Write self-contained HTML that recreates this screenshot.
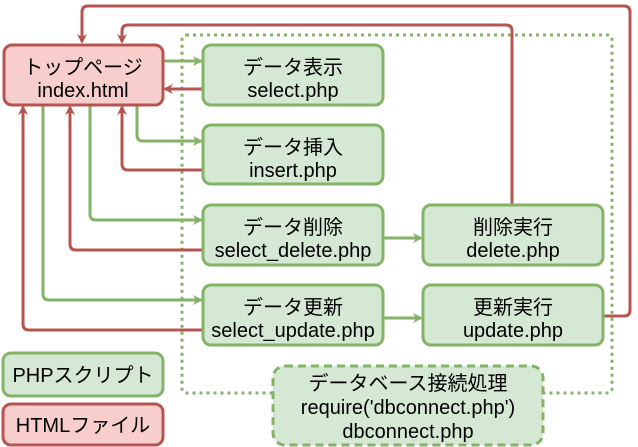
<!DOCTYPE html>
<html><head><meta charset="utf-8"><style>
html,body{margin:0;padding:0;background:#fff;}
svg{display:block}
text{font-family:"Liberation Sans","Noto Sans CJK JP",sans-serif;font-size:20px;fill:#000;text-anchor:middle}
</style></head><body>
<svg width="638" height="447" viewBox="0 0 638 447" xmlns="http://www.w3.org/2000/svg">
<defs>
<marker id="ag" markerWidth="10" markerHeight="10" refX="8" refY="5" orient="auto" markerUnits="userSpaceOnUse"><path d="M0,0 L10,5 L0,10 L3,5 Z" fill="#82b366"/></marker>
<marker id="ar" markerWidth="10" markerHeight="10" refX="8" refY="5" orient="auto" markerUnits="userSpaceOnUse"><path d="M0,0 L10,5 L0,10 L3,5 Z" fill="#b85450"/></marker>
</defs>
<rect x="182" y="35" width="430" height="358" rx="4" fill="none" stroke="#82b366" stroke-width="3" stroke-dasharray="3,4"/>
<g fill="none" stroke-width="3" stroke-linejoin="round">
<path d="M603,316 H624 Q630,316 630,310 V12 Q630,6 624,6 H88 Q82,6 82,12 V42" stroke="#b85450" marker-end="url(#ar)"/>
<path d="M512,205 V31 Q512,25 506,25 H128 Q122,25 122,31 V42" stroke="#b85450" marker-end="url(#ar)"/>
<path d="M163,61 H201" stroke="#82b366" marker-end="url(#ag)"/>
<path d="M203,89 H165" stroke="#b85450" marker-end="url(#ar)"/>
<path d="M137,105 V135 Q137,141 143,141 H201" stroke="#82b366" marker-end="url(#ag)"/>
<path d="M203,170 H128 Q122,170 122,164 V107" stroke="#b85450" marker-end="url(#ar)"/>
<path d="M90,105 V214 Q90,220 96,220 H201" stroke="#82b366" marker-end="url(#ag)"/>
<path d="M203,250 H76 Q70,250 70,244 V107" stroke="#b85450" marker-end="url(#ar)"/>
<path d="M43,105 V294 Q43,300 49,300 H201" stroke="#82b366" marker-end="url(#ag)"/>
<path d="M203,330 H29 Q23,330 23,324 V107" stroke="#b85450" marker-end="url(#ar)"/>
<path d="M383,238 H421" stroke="#82b366" marker-end="url(#ag)"/>
<path d="M383,318 H421" stroke="#82b366" marker-end="url(#ag)"/>
</g>
<g stroke-width="3">
<rect x="4" y="45" width="159" height="60" rx="8" fill="#f8cecc" stroke="#b85450"/>
<rect x="203" y="45" width="180" height="60" rx="8" fill="#d5e8d4" stroke="#82b366"/>
<rect x="203" y="125" width="180" height="59" rx="8" fill="#d5e8d4" stroke="#82b366"/>
<rect x="203" y="205" width="180" height="60" rx="8" fill="#d5e8d4" stroke="#82b366"/>
<rect x="423" y="205" width="180" height="60" rx="8" fill="#d5e8d4" stroke="#82b366"/>
<rect x="203" y="285" width="180" height="60" rx="8" fill="#d5e8d4" stroke="#82b366"/>
<rect x="423" y="285" width="180" height="60" rx="8" fill="#d5e8d4" stroke="#82b366"/>
<rect x="3" y="353" width="160" height="43" rx="8" fill="#d5e8d4" stroke="#82b366"/>
<rect x="3" y="404" width="160" height="41" rx="8" fill="#f8cecc" stroke="#b85450"/>
<rect x="273" y="366" width="270" height="79" rx="12" fill="#d5e8d4" stroke="#82b366" stroke-dasharray="8,5"/>
</g>
<text x="83" y="74">トップページ</text><text x="83" y="97">index.html</text>
<text x="293" y="74">データ表示</text><text x="293" y="97">select.php</text>
<text x="293" y="154">データ挿入</text><text x="293" y="177">insert.php</text>
<text x="293" y="234">データ削除</text><text x="293" y="257">select_delete.php</text>
<text x="513" y="234">削除実行</text><text x="513" y="257">delete.php</text>
<text x="293" y="314">データ更新</text><text x="293" y="337">select_update.php</text>
<text x="513" y="314">更新実行</text><text x="513" y="337">update.php</text>
<text x="83" y="382">PHPスクリプト</text>
<text x="83" y="432">HTMLファイル</text>
<text x="408" y="390">データベース接続処理</text>
<text x="408" y="414">require('dbconnect.php')</text>
<text x="408" y="438">dbconnect.php</text>
</svg>
</body></html>
